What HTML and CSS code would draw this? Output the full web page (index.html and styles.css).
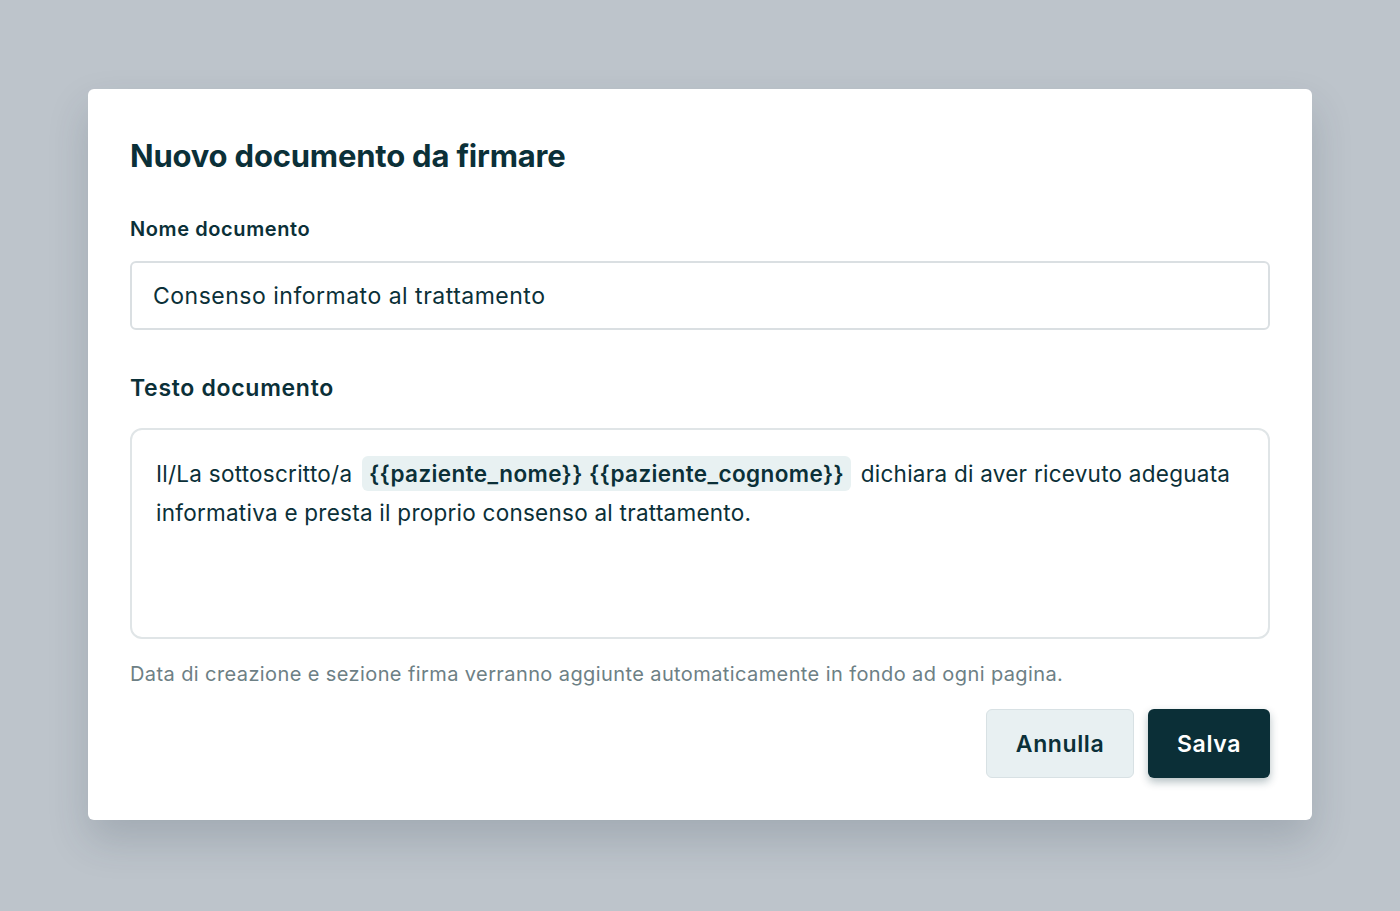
FILE: index.html
```html
<!DOCTYPE html>
<html>

<head>
    <meta name="viewport" content="width=device-width, initial-scale=1.0">
    <title>Nuovo documento da firmare</title>
    <link rel="stylesheet" href="styles.css">
</head>

<body>
    <div class="modal">
        <h1 class="modal-title">Nuovo documento da firmare</h1>

        <label class="field-label" for="doc_name">Nome documento</label>
        <div class="text-input">Consenso informato al trattamento</div>

        <h3 class="section-label">Testo documento</h3>
        <div class="text-area">
            Il/La sottoscritto/a <span class="tag">{{paziente_nome}} {{paziente_cognome}}</span> dichiara di aver ricevuto adeguata
            informativa e presta il proprio consenso al trattamento.
        </div>

        <p class="hint">Data di creazione e sezione firma verranno aggiunte automaticamente in fondo ad ogni pagina.</p>

        <div class="actions">
            <a class="btn btn-secondary">Annulla</a>
            <a class="btn btn-primary">Salva</a>
        </div>
    </div>
</body>

</html>
```

FILE: styles.css
```css
html {
    font-family: Inter, "Noto Sans", sans-serif;
    color: #0b3038;
}

body {
    margin: 0;
    background-color: #bdc4cb;
    min-height: 911px;
    padding-top: 89px;
    box-sizing: border-box;
}

.modal {
    width: 1224px;
    margin: 0 auto;
    box-sizing: border-box;
    background-color: white;
    border-radius: 6px;
    padding: 50px 42px 42px;
    box-shadow: 0 20px 40px rgba(40, 55, 70, 0.18);
    display: flex;
    flex-direction: column;
}

.modal-title {
    font-size: 31px;
    font-weight: 700;
    letter-spacing: -0.2px;
    margin: 0 0 44px;
    line-height: 34px;
}

.field-label {
    display: block;
    font-size: 20px;
    font-weight: 600;
    letter-spacing: 0.6px;
    line-height: 24px;
    margin-bottom: 20px;
}

.text-input {
    border: 2px solid #dadfe2;
    border-radius: 6px;
    height: 69px;
    box-sizing: border-box;
    padding: 0 21px;
    display: flex;
    align-items: center;
    font-size: 23px;
    letter-spacing: 0.5px;
}

.section-label {
    font-size: 23px;
    font-weight: 600;
    letter-spacing: 0.7px;
    line-height: 28px;
    margin: 44px 0 26px;
}

.text-area {
    border: 2px solid #e0e5e7;
    border-radius: 12px;
    height: 211px;
    box-sizing: border-box;
    padding: 24px 24px;
    font-size: 22.5px;
    letter-spacing: 0.25px;
    line-height: 39px;
}

.tag {
    background-color: #e8f1f2;
    border-radius: 6px;
    font-weight: 600;
    letter-spacing: 0.4px;
    padding: 4px 7px;
    margin: 0 3px;
}

.hint {
    font-size: 20px;
    letter-spacing: 0.4px;
    color: #6d8085;
    margin: 23px 0 0;
    line-height: 24px;
}

.actions {
    display: flex;
    justify-content: flex-end;
    gap: 14px;
    margin-top: 23px;
}

.btn {
    display: flex;
    align-items: center;
    justify-content: center;
    height: 69px;
    box-sizing: border-box;
    border-radius: 6px;
    font-size: 23px;
    font-weight: 600;
    letter-spacing: 0.6px;
    cursor: pointer;
}

.btn-secondary {
    width: 148px;
    background-color: #e8f0f2;
    border: 1px solid #d8e1e4;
    color: #0b3038;
}

.btn-primary {
    width: 122px;
    background-color: #0b2f37;
    color: white;
    box-shadow: 0 4px 8px rgba(11, 47, 55, 0.3);
}
```
